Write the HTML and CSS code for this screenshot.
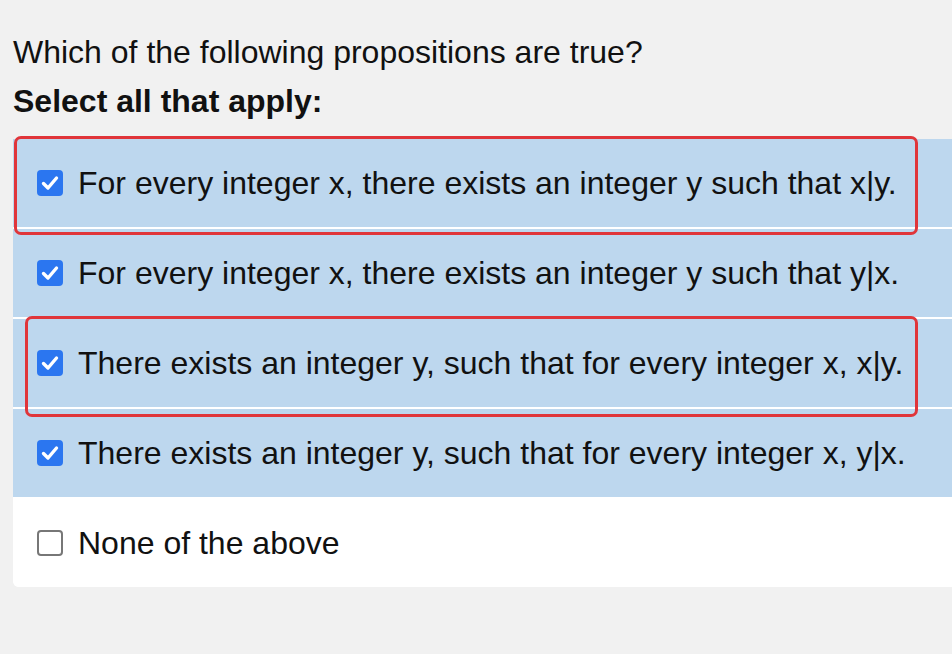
FILE: index.html
```html
<!DOCTYPE html>
<html>
<head>
<meta charset="utf-8">
<link rel="stylesheet" href="styles.css">
</head>
<body>
<div class="page">
  <div class="question">Which of the following propositions are true?</div>
  <div class="instr">Select all that apply:</div>
  <div class="panel">
    <div class="row sel">
      <span class="box on"><svg viewBox="0 0 26 26" width="26" height="26"><path d="M6.5 13.5 L11 18 L19.5 8" fill="none" stroke="#fff" stroke-width="3.4" stroke-linecap="round" stroke-linejoin="round"/></svg></span>
      <span class="label">For every integer x, there exists an integer y such that x|y.</span>
      <span class="mark m1"></span>
    </div>
    <div class="row sel">
      <span class="box on"><svg viewBox="0 0 26 26" width="26" height="26"><path d="M6.5 13.5 L11 18 L19.5 8" fill="none" stroke="#fff" stroke-width="3.4" stroke-linecap="round" stroke-linejoin="round"/></svg></span>
      <span class="label">For every integer x, there exists an integer y such that y|x.</span>
    </div>
    <div class="row sel">
      <span class="box on"><svg viewBox="0 0 26 26" width="26" height="26"><path d="M6.5 13.5 L11 18 L19.5 8" fill="none" stroke="#fff" stroke-width="3.4" stroke-linecap="round" stroke-linejoin="round"/></svg></span>
      <span class="label">There exists an integer y, such that for every integer x, x|y.</span>
      <span class="mark m2"></span>
    </div>
    <div class="row sel">
      <span class="box on"><svg viewBox="0 0 26 26" width="26" height="26"><path d="M6.5 13.5 L11 18 L19.5 8" fill="none" stroke="#fff" stroke-width="3.4" stroke-linecap="round" stroke-linejoin="round"/></svg></span>
      <span class="label">There exists an integer y, such that for every integer x, y|x.</span>
    </div>
    <div class="row last">
      <span class="box off"></span>
      <span class="label">None of the above</span>
    </div>
  </div>
</div>
</body>
</html>
```
FILE: styles.css
```css
html, body {
  margin: 0;
  padding: 0;
  background: #f1f1f1;
}
body {
  width: 952px;
  height: 654px;
  overflow: hidden;
  font-family: "Liberation Sans", Arial, sans-serif;
  color: #111;
}
.page {
  padding: 34px 0 0 13px;
}
.question {
  font-size: 32px;
  line-height: 36px;
}
.instr {
  font-size: 32px;
  line-height: 36px;
  font-weight: bold;
  margin-top: 13px;
}
.panel {
  margin-top: 20px;
  background: #fff;
  border-bottom-left-radius: 6px;
  display: flex;
  flex-direction: column;
  gap: 2px;
  position: relative;
}
.row {
  height: 88px;
  display: flex;
  align-items: center;
  padding-left: 24px;
  gap: 15px;
  position: relative;
}
.row.sel {
  background: #bdd7ee;
}
.row.last {
  background: #fff;
  border-bottom-left-radius: 6px;
}
.box {
  width: 26px;
  height: 26px;
  box-sizing: border-box;
  border-radius: 4px;
  flex: none;
  display: block;
}
.box svg { display: block; }
.box.on {
  background: #2b76f0;
}
.box.off {
  background: #fff;
  border: 2px solid #777;
}
.label {
  font-size: 32px;
  line-height: 36px;
}
.mark {
  position: absolute;
  z-index: 2;
  border: 3px solid #e0353a;
  border-radius: 7px;
  pointer-events: none;
}
.m1 {
  left: 1px;
  top: -3px;
  width: 898px;
  height: 93px;
}
.m2 {
  left: 12px;
  top: -3px;
  width: 887px;
  height: 95px;
}
```
